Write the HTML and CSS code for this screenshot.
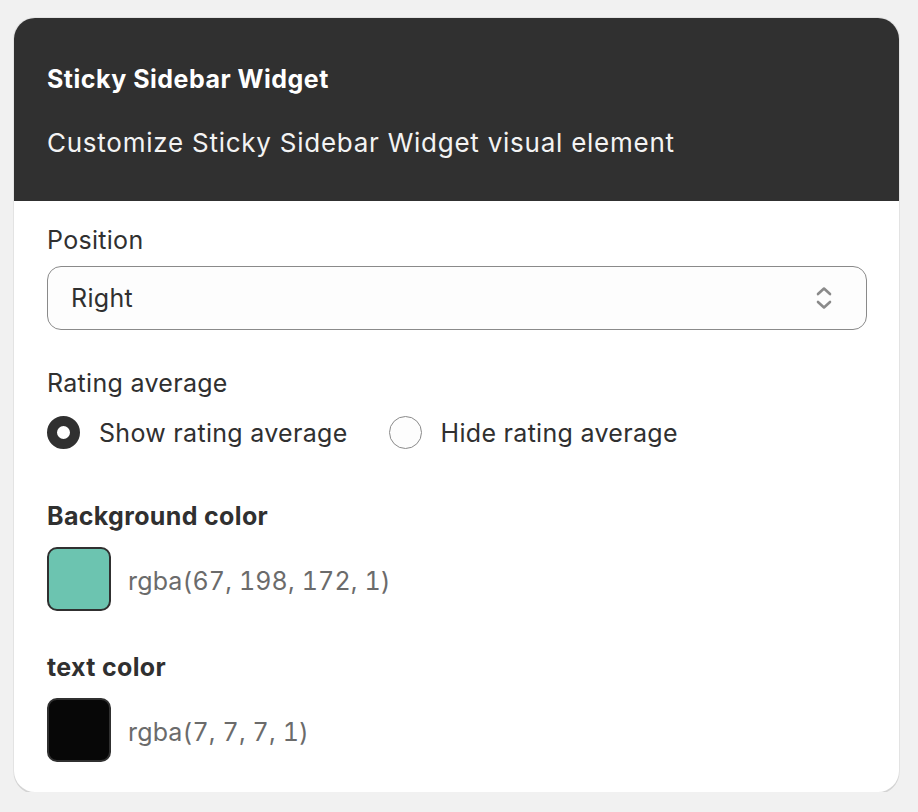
FILE: index.html
```html
<!DOCTYPE html>
<html>
<head>
<meta charset="utf-8">
<link rel="stylesheet" href="styles.css">
</head>
<body>
<div class="card">
  <div class="card-header">
    <div class="title">Sticky Sidebar Widget</div>
    <div class="subtitle">Customize Sticky Sidebar Widget visual element</div>
  </div>
  <div class="card-body">
    <div class="field">
      <div class="label">Position</div>
      <div class="select">
        <span>Right</span>
        <svg class="chev" width="20" height="28" viewBox="0 0 20 28"><path d="M4 10 L10 4.5 L16 10 M4 18 L10 23.5 L16 18" fill="none" stroke="#8a8a8a" stroke-width="2.6" stroke-linecap="round" stroke-linejoin="round"/></svg>
      </div>
    </div>
    <div class="field rating">
      <div class="label">Rating average</div>
      <div class="radios">
        <label class="radio"><span class="dot on"></span>Show rating average</label>
        <label class="radio"><span class="dot"></span>Hide rating average</label>
      </div>
    </div>
    <div class="field color-field">
      <div class="label bold">Background color</div>
      <div class="color-row">
        <span class="swatch teal"></span>
        <span class="color-value">rgba(67, 198, 172, 1)</span>
      </div>
    </div>
    <div class="field color-field">
      <div class="label bold">text color</div>
      <div class="color-row">
        <span class="swatch black"></span>
        <span class="color-value">rgba(7, 7, 7, 1)</span>
      </div>
    </div>
  </div>
</div>
</body>
</html>
```
FILE: styles.css
```css
* { box-sizing: border-box; }
html, body { margin: 0; padding: 0; }
body {
  background: #f1f1f1;
  font-family: Inter, "Noto Sans", sans-serif;
  color: #303030;
  padding: 18px 19px 0 14px;
}
.card {
  background: #fff;
  border-radius: 21px;
  overflow: hidden;
  box-shadow: 0 2px 0 #d4d4d4, 0 0 0 1px #e3e3e3;
  width: 885px;
}
.card-header {
  background: #303030;
  color: #fff;
  padding: 47px 33px 0;
  height: 183px;
}
.title {
  font-size: 25px;
  font-weight: 700;
  line-height: 28px;
  letter-spacing: 0.5px;
}
.subtitle {
  font-size: 26px;
  line-height: 30px;
  letter-spacing: 0.75px;
  margin-top: 35px;
  color: #f3f3f3;
}
.card-body {
  padding: 24px 32px 30px 33px;
}
.label {
  font-size: 25px;
  line-height: 30px;
  letter-spacing: 0.3px;
  color: #303030;
}
.label.bold { font-weight: 700; letter-spacing: 0.35px; }
.select {
  margin-top: 11px;
  height: 64px;
  border: 1.5px solid #8a8a8a;
  border-radius: 14px;
  background: #fdfdfd;
  display: flex;
  align-items: center;
  justify-content: space-between;
  padding: 0 32px 0 23px;
  font-size: 25px;
  letter-spacing: 0.3px;
}
.chev { display: block; }
.rating { margin-top: 38px; }
.radios {
  display: flex;
  gap: 41px;
  margin-top: 18px;
}
.radio {
  display: flex;
  align-items: center;
  gap: 19px;
  font-size: 25px;
  letter-spacing: 0.3px;
  line-height: 32px;
}
.dot {
  width: 33px;
  height: 33px;
  border-radius: 50%;
  border: 1.5px solid #8a8a8a;
  background: #fdfdfd;
  display: inline-block;
}
.dot.on {
  border: 10px solid #303030;
  background: #fff;
}
.color-field { margin-top: 52px; }
.color-field + .color-field { margin-top: 41px; }
.color-row {
  display: flex;
  align-items: center;
  gap: 17px;
  margin-top: 16px;
}
.swatch {
  width: 64px;
  height: 64px;
  border-radius: 10px;
  border: 2.5px solid #303030;
  display: inline-block;
}
.swatch.teal { background: #6cc4b0; }
.swatch.black { background: #070707; }
.color-value {
  font-size: 25px;
  color: #6b6b6b;
  font-variant-numeric: tabular-nums;
  letter-spacing: 0.15px;
  margin-top: 4px;
}
```
